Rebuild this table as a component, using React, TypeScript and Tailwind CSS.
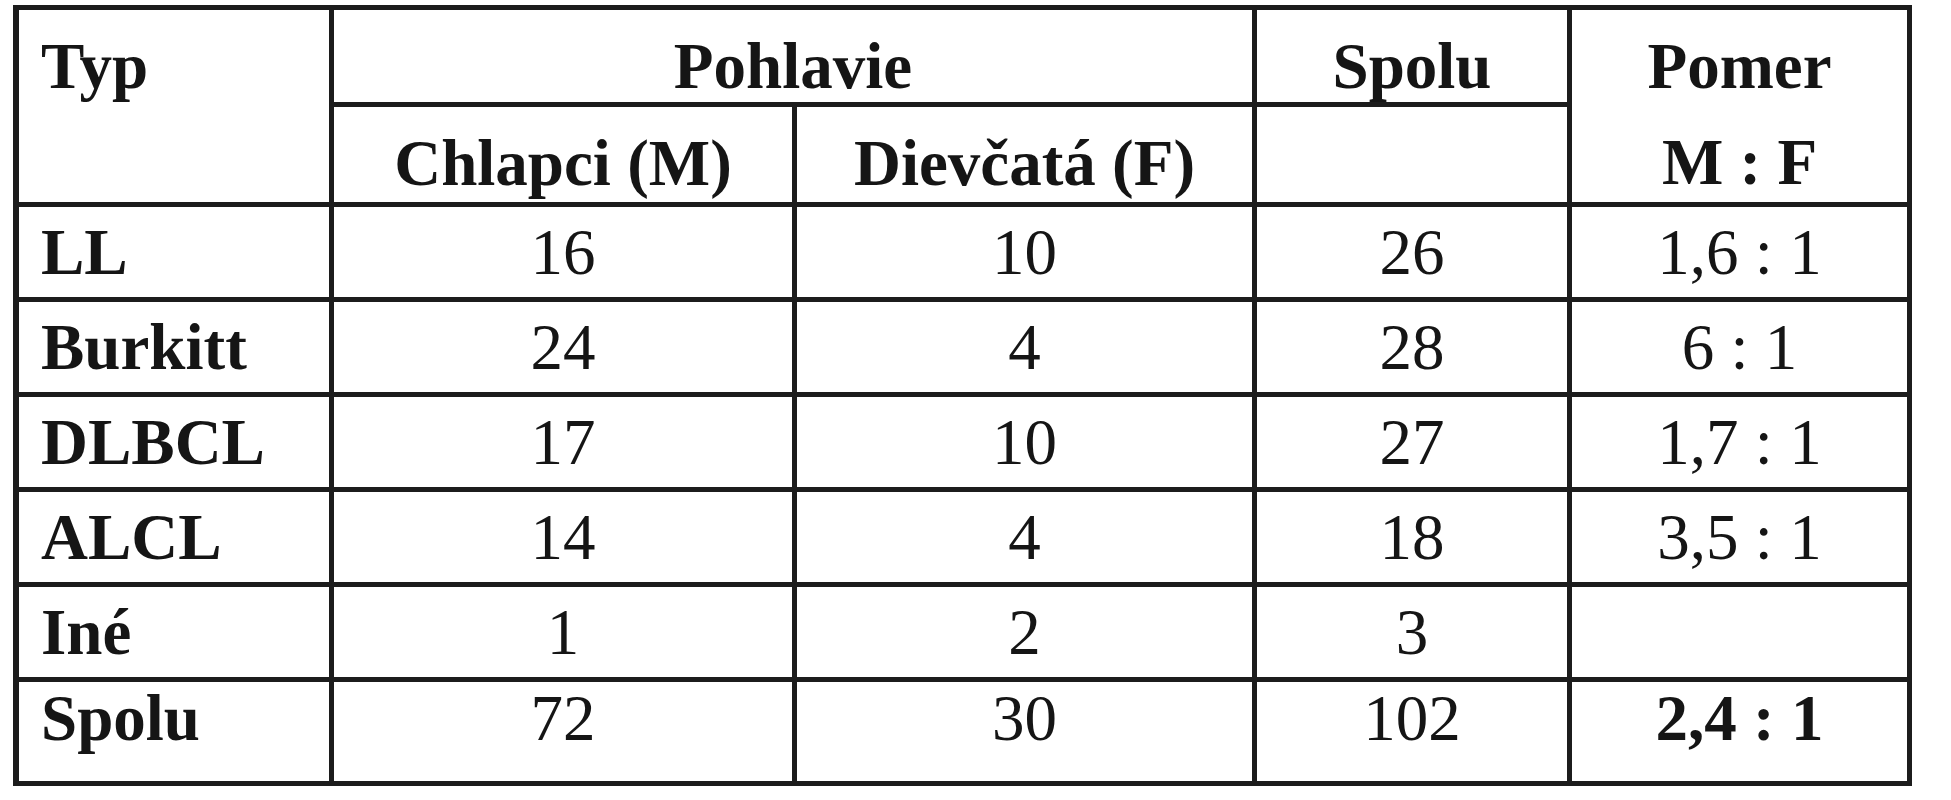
import React from 'react';

const rows = [
  { typ: 'LL', m: '16', f: '10', spolu: '26', pomer: '1,6 : 1' },
  { typ: 'Burkitt', m: '24', f: '4', spolu: '28', pomer: '6 : 1' },
  { typ: 'DLBCL', m: '17', f: '10', spolu: '27', pomer: '1,7 : 1' },
  { typ: 'ALCL', m: '14', f: '4', spolu: '18', pomer: '3,5 : 1' },
  { typ: 'Iné', m: '1', f: '2', spolu: '3', pomer: '' },
];

function App() {
  return (
    <div className="w-[1951px] h-[800px] bg-white text-[#151515] font-['Liberation_Serif',serif] text-[65px] leading-none">
      <div className="ml-[13px] mt-[5px] inline-grid grid-cols-[310px_458px_455px_310px_335px] grid-rows-[92px_95px_90px_90px_90px_90px_90px_99px] gap-[5px] p-[5px] pl-[6px] bg-[#1c1c1c]">
        {/* header */}
        <div className="row-span-2 bg-white pl-[22px] pt-[24px] font-bold">Typ</div>
        <div className="col-span-2 bg-white flex justify-center pt-[24px] font-bold">Pohlavie</div>
        <div className="bg-white flex justify-center pt-[24px] font-bold">Spolu</div>
        <div className="row-span-2 bg-white flex flex-col items-center pt-[24px] font-bold">
          <div>Pomer</div>
          <div className="mt-[31px]">M : F</div>
        </div>
        <div className="bg-white flex justify-center pt-[24px] font-bold">Chlapci (M)</div>
        <div className="bg-white flex justify-center pt-[24px] font-bold">Dievčatá (F)</div>
        <div className="bg-white" />

        {/* body */}
        {rows.map((r) => (
          <React.Fragment key={r.typ}>
            <div className="bg-white flex items-center pl-[22px] font-bold">{r.typ}</div>
            <div className="bg-white flex items-center justify-center">{r.m}</div>
            <div className="bg-white flex items-center justify-center">{r.f}</div>
            <div className="bg-white flex items-center justify-center">{r.spolu}</div>
            <div className="bg-white flex items-center justify-center">{r.pomer}</div>
          </React.Fragment>
        ))}

        <div className="bg-white pl-[22px] pt-[4px] font-bold">Spolu</div>
        <div className="bg-white flex justify-center pt-[4px]">72</div>
        <div className="bg-white flex justify-center pt-[4px]">30</div>
        <div className="bg-white flex justify-center pt-[4px]">102</div>
        <div className="bg-white flex justify-center pt-[4px] font-bold">2,4 : 1</div>
      </div>
    </div>
  );
}

export default App;
